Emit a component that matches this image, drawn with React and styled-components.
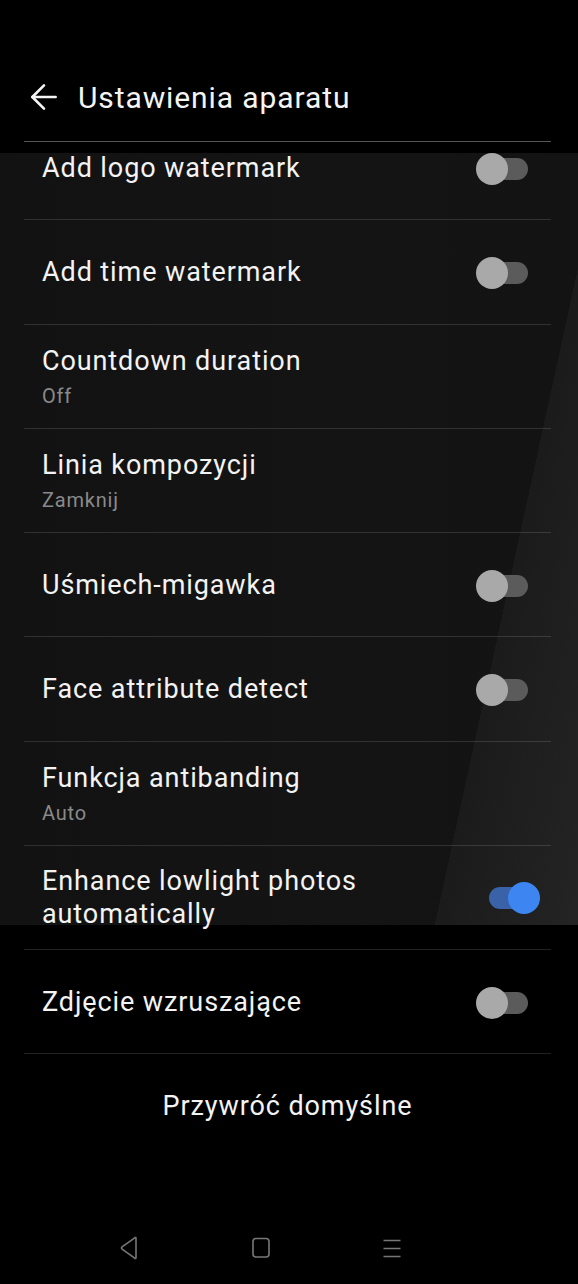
import React from "react"
import styled, { createGlobalStyle } from "styled-components"
import { ArrowLeft } from "lucide-react"

const GlobalStyle = createGlobalStyle`
  html, body {
    margin: 0;
    padding: 0;
    background: #000;
  }
  body {
    font-family: Roboto, "Noto Sans", "Liberation Sans", sans-serif;
    -webkit-font-smoothing: antialiased;
  }
`

const settings = [
  { label: "Add logo watermark", toggle: false },
  { label: "Add time watermark", toggle: false },
  { label: "Countdown duration", value: "Off" },
  { label: "Linia kompozycji", value: "Zamknij" },
  { label: "Uśmiech-migawka", toggle: false },
  { label: "Face attribute detect", toggle: false },
  { label: "Funkcja antibanding", value: "Auto" },
  { label: "Enhance lowlight photos automatically", toggle: true },
  { label: "Zdjęcie wzruszające", toggle: false },
]

export default function App() {
  return (
    <>
      <GlobalStyle />
      <Page>
        <Header>
          <BackButton aria-label="Wstecz">
            <ArrowLeft size={40} strokeWidth={1.55} color="#f4f4f4" />
          </BackButton>
          <Title>Ustawienia aparatu</Title>
        </Header>

        <List>
          <Scroller>
            {settings.map(item => (
              <Row key={item.label}>
                <TextBlock shifted={!!item.value}>
                  <Label>{item.label}</Label>
                  {item.value && <Value>{item.value}</Value>}
                </TextBlock>
                {item.toggle !== undefined && <Switch on={item.toggle} />}
              </Row>
            ))}
            <RestoreRow>Przywróć domyślne</RestoreRow>
          </Scroller>
        </List>

        <NavBar>
          <NavIcon viewBox="0 0 20 24">
            <path
              d="M17 2.5 L17 21.5 Q17 23 15.7 22.2 L3.1 13.1 Q1.9 12 3.1 10.9 L15.7 1.8 Q17 1 17 2.5 Z"
              fill="none"
              stroke="#777"
              strokeWidth="1.6"
              strokeLinejoin="round"
            />
          </NavIcon>
          <NavIcon viewBox="0 0 20 24">
            <rect x="2" y="2.5" width="16" height="18.5" rx="3" fill="none" stroke="#777" strokeWidth="1.6" />
          </NavIcon>
          <NavIcon viewBox="0 0 20 24">
            <path d="M0.5 4.5 H17.5 M0.5 12.5 H17.5 M0.5 20.5 H17.5" stroke="#777" strokeWidth="1.6" />
          </NavIcon>
        </NavBar>
      </Page>
    </>
  )
}

const Switch = ({ on }) => (
  <SwitchBox role="switch" aria-checked={on}>
    <Track on={on} />
    <Thumb on={on} />
  </SwitchBox>
)

const Page = styled.div`
  min-height: 1284px;
  display: flex;
  flex-direction: column;
  color: #f3f3f3;
  background:
    linear-gradient(102.3deg, transparent 80.8%, #1b1b1b 80.8%, #242424 100%) 0 153px / 100% 772px no-repeat,
    linear-gradient(90deg, #121212, #141414 60%, #131313) 0 153px / 100% 772px no-repeat,
    #000;
`

const Header = styled.div`
  margin: 0 27px 0 24px;
  padding-top: 60px;
  padding-bottom: 7px;
  height: 74px;
  display: flex;
  align-items: center;
  gap: 14px;
  border-bottom: 1px solid #555;
`

const BackButton = styled.div`
  display: flex;
  width: 40px;
  height: 40px;
`

const Title = styled.h1`
  margin: 0;
  font-size: 30px;
  font-weight: 400;
  letter-spacing: 0.9px;
  color: #f4f4f4;
`

const List = styled.div`
  overflow: hidden;
`

const Scroller = styled.div`
  margin-top: -26px;
`

const Row = styled.div`
  box-sizing: border-box;
  height: 104.25px;
  margin: 0 27px 0 24px;
  padding: 2px 11px 0 18px;
  display: flex;
  align-items: center;
  border-bottom: 1px solid rgba(255, 255, 255, 0.13);
`

const TextBlock = styled.div`
  flex: 1;
  min-width: 0;
  padding-right: 24px;
  margin-top: ${props => (props.shifted ? "6px" : "0")};
`

const Label = styled.div`
  font-size: 27px;
  line-height: 33px;
  letter-spacing: 0.9px;
  color: #f3f3f3;
`

const Value = styled.div`
  font-size: 20px;
  line-height: 37px;
  letter-spacing: 0.8px;
  color: #8a8a8a;
`

const SwitchBox = styled.div`
  position: relative;
  width: 64px;
  height: 32px;
  flex-shrink: 0;
`

const Track = styled.div`
  position: absolute;
  left: 13px;
  right: 12px;
  top: 5px;
  height: 22px;
  border-radius: 11px;
  background: ${props => (props.on ? "#3a62a8" : "#5b5b5b")};
`

const Thumb = styled.div`
  position: absolute;
  top: 0;
  left: ${props => (props.on ? "32px" : "0")};
  width: 32px;
  height: 32px;
  border-radius: 50%;
  background: ${props => (props.on ? "#3d86f2" : "#a9a9a9")};
`

const RestoreRow = styled.div`
  height: 104px;
  margin: 0 27px 0 24px;
  display: flex;
  align-items: center;
  justify-content: center;
  font-size: 27px;
  letter-spacing: 0.9px;
  color: #f3f3f3;
`

const NavBar = styled.div`
  margin-top: auto;
  height: 72px;
  display: flex;
  align-items: center;
  justify-content: center;
  gap: 112px;
  padding-right: 56px;
`

const NavIcon = styled.svg`
  width: 20px;
  height: 24px;
`
